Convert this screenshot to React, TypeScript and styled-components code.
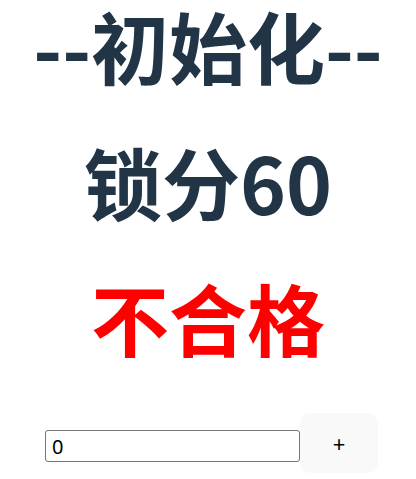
import React from "react";
import styled, { createGlobalStyle } from "styled-components";

const Global = createGlobalStyle`
  html, body { margin: 0; padding: 0; background: #ffffff; }
  body { font-family: "Noto Sans CJK SC", "Noto Sans", sans-serif; color: #213547; }
`;

const Page = styled.div`
  width: 416px;
  display: flex;
  flex-direction: column;
  align-items: center;
`;

const Title = styled.h1<{ $color?: string }>`
  margin: 0;
  box-sizing: border-box;
  height: 136px;
  padding-top: 6px;
  display: flex;
  align-items: flex-start;
  justify-content: center;
  font-size: 78px;
  line-height: 78px;
  font-weight: 700;
  white-space: nowrap;
  color: ${(p) => p.$color || "#213547"};
`;

const Row = styled.div`
  display: flex;
  align-items: center;
  margin-top: 5px;
  padding-left: 45px;
  width: 100%;
  box-sizing: border-box;
`;

const Input = styled.input`
  margin: 6px 0 0 0;
  width: 255px;
  height: 32px;
  box-sizing: border-box;
  border: 1px solid #767676;
  border-radius: 3px;
  padding: 0 6px;
  font-family: "Noto Sans", "Liberation Sans", sans-serif;
  font-size: 20px;
  color: #000;
  outline: none;
`;

const Button = styled.button`
  width: 78px;
  height: 60px;
  border: none;
  border-radius: 10px;
  background: #f9f9f9;
  font-family: "Noto Sans", "Liberation Sans", sans-serif;
  font-size: 22px;
  color: #000;
  cursor: pointer;
`;

export default function App() {
  const [value, setValue] = React.useState("0");
  return (
    <>
      <Global />
      <Page>
        <Title>--初始化--</Title>
        <Title>锁分60</Title>
        <Title $color="#ff0000">不合格</Title>
        <Row>
          <Input value={value} onChange={(e) => setValue(e.target.value)} />
          <Button>+</Button>
        </Row>
      </Page>
    </>
  );
}
